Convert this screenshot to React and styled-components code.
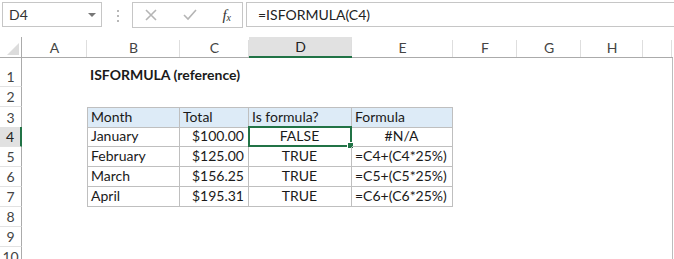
import React from 'react';
import styled, { createGlobalStyle, css } from 'styled-components';

const GREEN = '#217346';
const GRID_COLS = '22px 65px 93px 69px 103px 101px 64px 64px 62px 29px';

const GlobalStyle = createGlobalStyle`
    html, body {
        margin: 0;
        padding: 0;
        background: #ffffff;
        overflow: hidden;
    }
    body {
        font-family: Lato, "Liberation Sans", sans-serif;
        color: #222;
    }
`;

const Page = styled.div`
    width: 674px;
    height: 259px;
    overflow: hidden;
    background: #fff;
`;

const Toolbar = styled.div`
    display: flex;
    align-items: flex-start;
    padding: 2px 0 0 2px;
    height: 36px;
    box-sizing: border-box;
`;

const NameBox = styled.div`
    position: relative;
    width: 100px;
    height: 25px;
    box-sizing: border-box;
    border: 1px solid #c6c6c6;
    display: flex;
    align-items: center;
    padding-left: 6px;
    font-size: 14px;
    color: #333;
`;

const DropArrow = styled.span`
    margin-left: auto;
    margin-right: 5px;
    width: 0;
    height: 0;
    border-left: 4px solid transparent;
    border-right: 4px solid transparent;
    border-top: 4px solid #777;
`;

const Grip = styled.div`
    display: flex;
    flex-direction: column;
    gap: 3px;
    margin: 8px 13px 0 15px;
    span {
        width: 2px;
        height: 2px;
        background: #b8b8b8;
    }
`;

const FxBox = styled.div`
    width: 111px;
    height: 26px;
    box-sizing: border-box;
    border: 1px solid #c6c6c6;
    display: flex;
    align-items: center;
    justify-content: space-between;
    padding: 0 11px 0 12px;
`;

const FxLabel = styled.span`
    font-family: "Liberation Serif", serif;
    font-style: italic;
    font-size: 15px;
    color: #333;
    sub {
        font-size: 10px;
        vertical-align: -1px;
    }
`;

const FormulaInput = styled.div`
    margin-left: 3px;
    flex: 1;
    height: 25px;
    box-sizing: border-box;
    border: 1px solid #c6c6c6;
    border-right: none;
    display: flex;
    align-items: center;
    padding-left: 11px;
    font-size: 14px;
    color: #222;
`;

const Sheet = styled.div`
    width: 673px;
`;

const HeaderRow = styled.div`
    display: grid;
    grid-template-columns: ${GRID_COLS};
    height: 20px;
    margin-top: 1px;
    border-bottom: 1px solid #ababab;
`;

const Corner = styled.div`
    position: relative;
    border-right: 1px solid #ababab;
    &::after {
        content: '';
        position: absolute;
        right: 2px;
        bottom: 2px;
        width: 0;
        height: 0;
        border-left: 12px solid transparent;
        border-bottom: 12px solid #dcdcdc;
    }
`;

const ColHeader = styled.div`
    position: relative;
    display: flex;
    align-items: center;
    justify-content: center;
    font-size: 14px;
    color: #444;
    box-sizing: border-box;
    &::after {
        content: '';
        position: absolute;
        right: 0;
        top: 3px;
        bottom: 0;
        width: 1px;
        background: #dedede;
    }
    ${(p) =>
        p.$active &&
        css`
            background: #e1e1e1;
            border-bottom: 2px solid ${GREEN};
            margin-bottom: -1px;
            color: #222;
        `}
`;

const Body = styled.div`
    border-right: 1px solid #bcbcbc;
`;

const Row = styled.div`
    display: grid;
    grid-template-columns: ${GRID_COLS};
    height: ${(p) => p.$height}px;
`;

const RowHeader = styled.div`
    display: flex;
    align-items: flex-end;
    justify-content: center;
    padding-bottom: 1px;
    box-sizing: border-box;
    font-size: 14px;
    color: #444;
    border-right: 1px solid #ababab;
    border-bottom: 1px solid #e2e2e2;
    ${(p) =>
        p.$active &&
        css`
            background: #e1e1e1;
            border-right: 2px solid ${GREEN};
            color: #222;
        `}
`;

const Cell = styled.div`
    position: relative;
    display: flex;
    align-items: flex-end;
    box-sizing: border-box;
    padding: 0 4px 2px 3px;
    font-size: 14px;
    white-space: nowrap;
    color: #1a1a1a;
    justify-content: ${(p) =>
        p.$align === 'right' ? 'flex-end' : p.$align === 'center' ? 'center' : 'flex-start'};
    font-weight: ${(p) => (p.$bold ? 700 : 400)};
    ${(p) =>
        p.$table &&
        css`
            border-right: 1px solid #bfbfbf;
            border-bottom: 1px solid #bfbfbf;
        `}
    ${(p) => p.$first && css`border-left: 1px solid #bfbfbf;`}
    ${(p) => p.$top && css`border-top: 1px solid #bfbfbf;`}
    ${(p) => p.$fill && css`background: #ddebf7;`}
    ${(p) =>
        p.$active &&
        css`
            &::before {
                content: '';
                position: absolute;
                left: -1px;
                top: -1px;
                right: -1px;
                bottom: -1px;
                border: 2px solid ${GREEN};
            }
            &::after {
                content: '';
                position: absolute;
                right: -3px;
                bottom: -3px;
                width: 5px;
                height: 5px;
                background: ${GREEN};
                border: 1px solid #fff;
            }
        `}
`;

const columns = ['A', 'B', 'C', 'D', 'E', 'F', 'G', 'H', ''];

const tableRows = [
    ['Month', 'Total', 'Is formula?', 'Formula'],
    ['January', '$100.00', 'FALSE', '#N/A'],
    ['February', '$125.00', 'TRUE', '=C4+(C4*25%)'],
    ['March', '$156.25', 'TRUE', '=C5+(C5*25%)'],
    ['April', '$195.31', 'TRUE', '=C6+(C6*25%)'],
];

const alignFor = (rowIdx, colIdx) => {
    if (rowIdx === 0) return 'left';
    if (colIdx === 1) return 'right';
    if (colIdx === 2) return 'center';
    if (colIdx === 3 && rowIdx === 1) return 'center';
    return 'left';
};

const XIcon = () => (
    <svg width="12" height="12" viewBox="0 0 12 12">
        <path d="M1 1 L11 11 M11 1 L1 11" stroke="#b5b5b5" strokeWidth="1.6" fill="none" />
    </svg>
);

const CheckIcon = () => (
    <svg width="14" height="12" viewBox="0 0 14 12">
        <path d="M1 6 L5 10 L13 1" stroke="#b5b5b5" strokeWidth="1.6" fill="none" />
    </svg>
);

const App = () => {
    const rows = [];
    for (let r = 1; r <= 10; r++) {
        const cells = [];
        const tIdx = r - 3;
        const inTable = tIdx >= 0 && tIdx < tableRows.length;
        for (let c = 0; c < 9; c++) {
            const key = `${r}-${c}`;
            if (r === 1 && c === 1) {
                cells.push(
                    <Cell key={key} $bold style={{ paddingBottom: 4 }}>
                        ISFORMULA (reference)
                    </Cell>
                );
            } else if (inTable && c >= 1 && c <= 4) {
                const ci = c - 1;
                cells.push(
                    <Cell
                        key={key}
                        $table
                        $first={ci === 0}
                        $top={tIdx === 0}
                        $fill={tIdx === 0}
                        $align={alignFor(tIdx, ci)}
                        $active={r === 4 && c === 3}
                    >
                        {tableRows[tIdx][ci]}
                    </Cell>
                );
            } else {
                cells.push(<Cell key={key} />);
            }
        }
        rows.push(
            <Row key={r} $height={r === 1 ? 29 : 20}>
                <RowHeader $active={r === 4}>{r}</RowHeader>
                {cells}
            </Row>
        );
    }

    return (
        <Page>
            <GlobalStyle />
            <Toolbar>
                <NameBox>
                    D4
                    <DropArrow />
                </NameBox>
                <Grip>
                    <span />
                    <span />
                    <span />
                </Grip>
                <FxBox>
                    <XIcon />
                    <CheckIcon />
                    <FxLabel>
                        f<sub>x</sub>
                    </FxLabel>
                </FxBox>
                <FormulaInput>=ISFORMULA(C4)</FormulaInput>
            </Toolbar>
            <Sheet>
                <HeaderRow>
                    <Corner />
                    {columns.map((col, i) => (
                        <ColHeader key={i} $active={col === 'D'}>
                            {col}
                        </ColHeader>
                    ))}
                </HeaderRow>
                <Body>{rows}</Body>
            </Sheet>
        </Page>
    );
};

export default App;
